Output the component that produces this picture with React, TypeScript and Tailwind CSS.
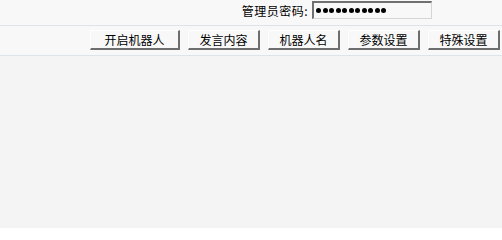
import React from "react"

const cjk = { fontFamily: '"Noto Sans CJK SC", "Noto Sans", sans-serif' }

const buttons = [
  { label: "开启机器人", w: "w-[90px]" },
  { label: "发言内容", w: "w-[72px]" },
  { label: "机器人名", w: "w-[72px]" },
  { label: "参数设置", w: "w-[72px]" },
  { label: "特殊设置", w: "w-[72px]" },
]

export default function App() {
  return (
    <div className="min-h-[228px] bg-[#f4f4f4] text-[12px] text-black" style={cjk}>
      <div className="flex h-[26px] items-start justify-end border-b border-[#dde3ea] bg-[#f8f8f8] pr-[70px]">
        <span className="mt-[3px] mr-[4px] leading-[16px] tracking-[0.5px]">管理员密码:</span>
        <div className="mt-px flex h-[18px] w-[120px] items-center border-t-2 border-l-2 border-r border-b border-t-[#707070] border-l-[#707070] border-r-[#d4d4d4] border-b-[#d4d4d4] bg-[#f8f8f8] pl-[2px]">
          <span className="flex gap-[1.5px]">
            {Array.from({ length: 11 }).map((_, i) => (
              <span key={i} className="block h-[5px] w-[5px] rounded-full bg-black" />
            ))}
          </span>
        </div>
      </div>
      <div className="flex h-[30px] items-start justify-end gap-[8px] border-b border-[#dde3ea] bg-[#f8f8f8] pr-[2px] pt-[4px]">
        {buttons.map((b) => (
          <button
            key={b.label}
            className={`${b.w} h-[20px] border-t border-l border-r-2 border-b-2 border-t-white border-l-white border-r-[#6e6e6e] border-b-[#6e6e6e] bg-[#f8f8f8] text-[12px] leading-[16px] text-black`}
            style={cjk}
          >
            {b.label}
          </button>
        ))}
      </div>
    </div>
  )
}
